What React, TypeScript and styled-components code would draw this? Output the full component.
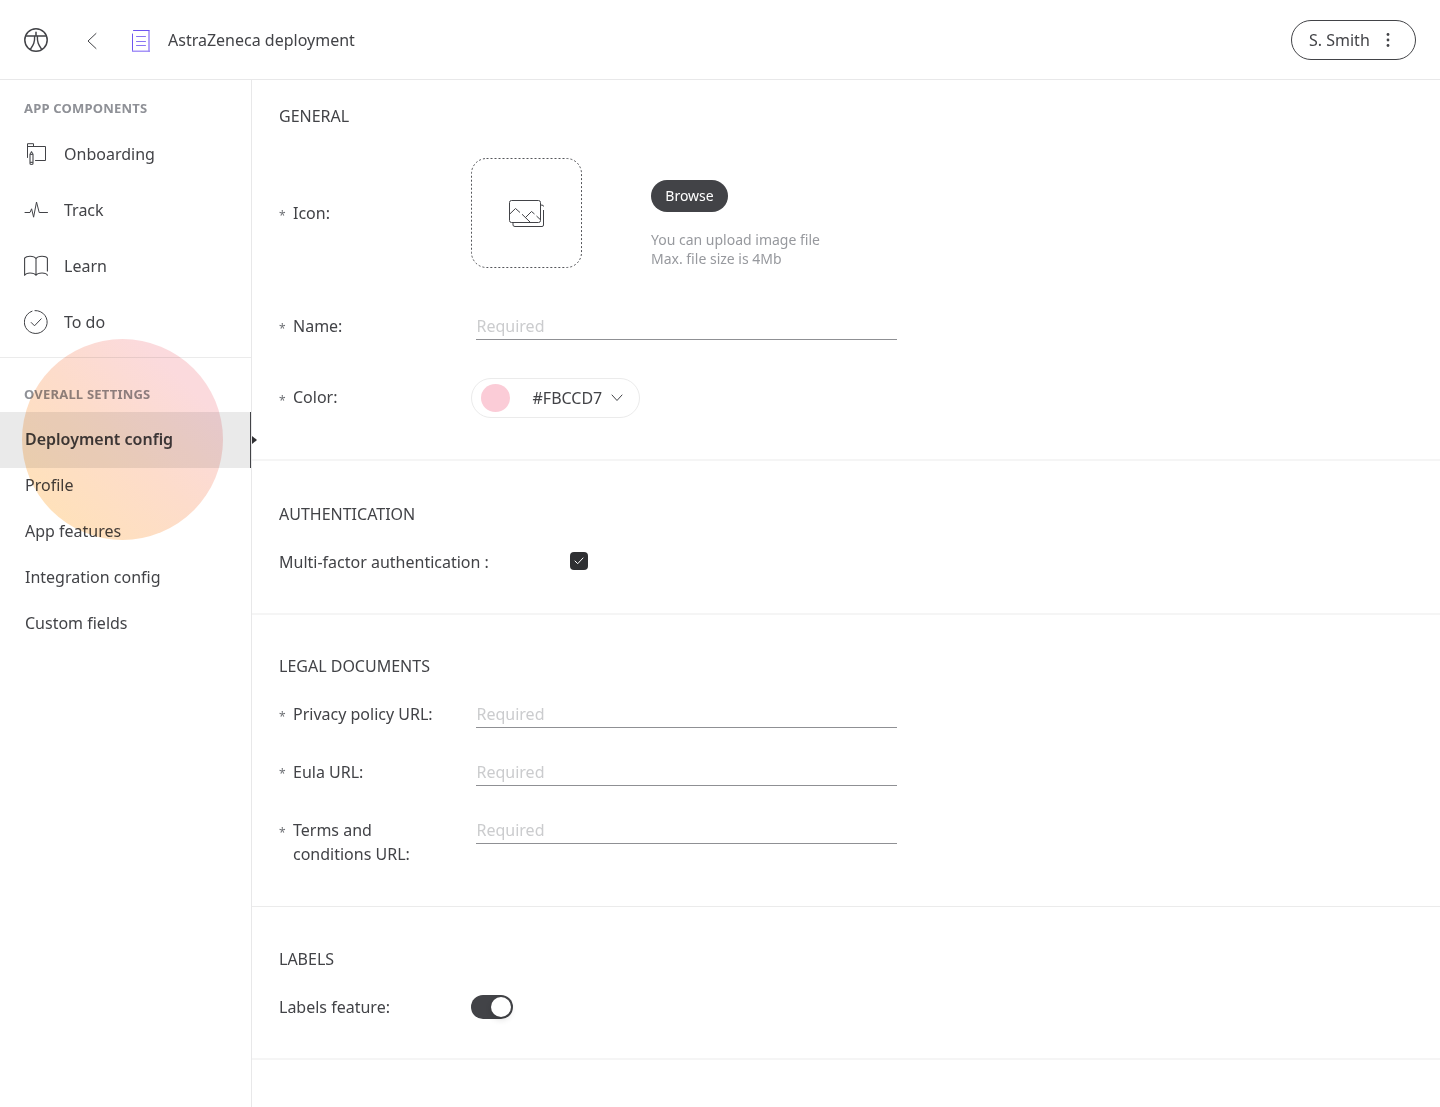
import React from "react";
import styled, { createGlobalStyle } from "styled-components";

const ink = "#424347";
const line = "#ebebeb";

const GlobalStyle = createGlobalStyle`
  *, *::before, *::after { box-sizing: border-box; }
  body {
    margin: 0;
    background: #fff;
    color: ${ink};
    font-family: "Noto Sans", sans-serif;
    font-size: 16px;
    line-height: 24px;
  }
  button, input { font: inherit; color: inherit; }
`;

const Page = styled.div`
  display: flex;
  flex-direction: column;
  width: 1440px;
  height: 1107px;
  overflow: hidden;
`;

const Header = styled.header`
  display: flex;
  align-items: center;
  flex: none;
  height: 80px;
  padding: 0 24px;
  border-bottom: 1px solid #e8e8e9;
`;

const BackButton = styled.button`
  display: flex;
  margin: 3px 0 0 38px;
  padding: 0;
  border: 0;
  background: none;
`;

const HeaderIcon = styled.span`
  display: flex;
  margin: 3px 18px 0 34px;
`;

const HeaderTitle = styled.span`
  flex: 1;
`;

const UserButton = styled.button`
  display: flex;
  align-items: center;
  justify-content: space-between;
  width: 125px;
  height: 40px;
  margin-top: 1px;
  padding: 0 24px 0 17px;
  border: 1px solid ${ink};
  border-radius: 20px;
  background: #fff;
`;

const Body = styled.div`
  display: flex;
  flex: 1;
  min-height: 0;
`;

const Sidebar = styled.nav`
  position: relative;
  flex: none;
  width: 252px;
  border-right: 1px solid #e8e8e9;
`;

const SideHeading = styled.h2<{ $top: number; $bottom: number }>`
  margin: 0;
  padding: ${(p) => p.$top}px 24px ${(p) => p.$bottom}px;
  color: #8f9197;
  font-size: 13px;
  font-weight: 700;
  line-height: 16px;
  letter-spacing: 0.2px;
`;

const SideGroup = styled.div`
  height: 278px;
  border-bottom: 1px solid ${line};
`;

const SideItem = styled.a`
  display: flex;
  align-items: center;
  gap: 16px;
  height: 56px;
  padding-left: 24px;
`;

const SubItem = styled.a<{ $active?: boolean }>`
  display: flex;
  align-items: center;
  position: relative;
  height: ${(p) => (p.$active ? 56 : 46)}px;
  padding-left: 25px;
  padding-bottom: ${(p) => (p.$active ? 2 : 12)}px;
  background: ${(p) => (p.$active ? "#eaeaea" : "none")};
  border-right: ${(p) => (p.$active ? `1px solid ${ink}` : "0")};
  font-weight: ${(p) => (p.$active ? 600 : 400)};
  color: ${(p) => (p.$active ? "#3c3d41" : ink)};

  &::after {
    content: "";
    display: ${(p) => (p.$active ? "block" : "none")};
    position: absolute;
    left: 252px;
    top: 23.5px;
    border: solid transparent;
    border-width: 4px 0 4px 5px;
    border-left-color: #2f3033;
  }
`;

const Highlight = styled.div`
  position: absolute;
  left: 22px;
  top: 259px;
  width: 201px;
  height: 201px;
  border-radius: 50%;
  background: linear-gradient(45deg, #ffe2b8 8%, #fddccb 50%, #fbdadd 80%);
  mix-blend-mode: multiply;
  pointer-events: none;
`;

const Main = styled.main`
  flex: 1;
`;

const Section = styled.section<{ $height: number; $top: number; $thin?: boolean }>`
  height: ${(p) => p.$height}px;
  padding: ${(p) => p.$top}px 27px 0;
  border-bottom: ${(p) => (p.$thin ? `1px solid ${line}` : "2px solid #f5f5f5")};
`;

const SectionTitle = styled.h1<{ $gap?: number }>`
  margin: 0 0 ${(p) => p.$gap ?? 24}px;
  font-size: 16px;
  font-weight: 400;
  line-height: 24px;
`;

const Row = styled.div<{ $center?: boolean; $height: number; $gap?: number }>`
  display: flex;
  align-items: ${(p) => (p.$center ? "center" : "flex-start")};
  height: ${(p) => p.$height}px;
  margin-bottom: ${(p) => p.$gap ?? 0}px;
`;

const Label = styled.label<{ $width?: number; $lift?: number }>`
  display: flex;
  flex: none;
  width: ${(p) => p.$width ?? 192}px;
  padding-bottom: ${(p) => p.$lift ?? 0}px;
`;

const Star = styled.span<{ $top: number }>`
  flex: none;
  width: 14px;
  height: 24px;
  padding-top: ${(p) => p.$top}px;
  color: #6e7075;
  font-size: 12px;
`;

const TextInput = styled.input`
  width: 421px;
  height: 26px;
  margin: 0 0 0 5px;
  padding: 0 0 1px 0.5px;
  border: 0;
  border-bottom: 1px solid #8f9094;
  border-radius: 0;
  background: none;
  outline: none;
  &::placeholder { color: #cbccce; opacity: 1; }
`;

const DropArea = styled.div`
  width: 112px;
  height: 110px;
`;

const UploadInfo = styled.div`
  display: flex;
  flex-direction: column;
  align-items: flex-start;
  align-self: flex-start;
  margin-left: 68px;
  padding-top: 22px;
`;

const BrowseButton = styled.button`
  width: 77px;
  height: 32px;
  margin-bottom: 18px;
  padding: 0;
  border: 0;
  border-radius: 16px;
  background: ${ink};
  color: #fff;
  font-size: 14px;
  line-height: 32px;
`;

const Hint = styled.p`
  margin: 0;
  color: #97999e;
  font-size: 14px;
  line-height: 19px;
`;

const ColorPicker = styled.button`
  display: flex;
  align-items: center;
  width: 169px;
  height: 40px;
  padding: 0 16px 0 9px;
  border: 1px solid ${line};
  border-radius: 20px;
  background: #fff;
`;

const Swatch = styled.span`
  width: 29px;
  height: 28px;
  margin-right: 22.5px;
  border-radius: 50%;
  background: #fbccd7;
`;

const ColorValue = styled.span`
  margin-right: 8.5px;
`;

const Checkbox = styled.span`
  display: flex;
  align-items: center;
  justify-content: center;
  width: 18px;
  height: 18px;
  margin-top: 2px;
  border-radius: 4px;
  background: #2f3033;
`;

const Toggle = styled.span`
  display: flex;
  justify-content: flex-end;
  width: 42px;
  height: 24px;
  padding: 2px;
  border-radius: 12px;
  background: ${ink};
`;

const Knob = styled.span`
  width: 20px;
  height: 20px;
  border-radius: 50%;
  background: #fff;
  box-shadow: 0 3px 6px rgba(0, 0, 0, 0.12);
`;

const Icon = ({ w = 24, h = 24, sw = 1, color = ink, children }: {
  w?: number; h?: number; sw?: number; color?: string; children: React.ReactNode;
}) => (
  <svg width={w} height={h} viewBox={`0 0 ${w} ${h}`} fill="none" stroke={color}
    strokeWidth={sw} strokeLinecap="round" strokeLinejoin="round">{children}</svg>
);

const LogoIcon = () => (
  <Icon sw={1.5}>
    <circle cx="12" cy="12" r="11.2" />
    <path d="M2.2 8H21.8M12 4.2V8" />
    <path d="M10.600 8.500C10.900 14 9.500 16.500 6.500 21.200M13.400 8.500C13.100 14 14.500 16.500 17.500 21.200" strokeWidth="1.400" />
  </Icon>
);

const OnboardingIcon = () => (
  <Icon>
    <path d="M3.500 15.500V1.700H9.500V4.500M3.500 4.500H21.500V18.500H11.500" />
    <path d="M6 12.200L7.500 9.700L9 12.200V21.500Q9 22.500 7.500 22.500T6 21.500ZM6 12.500H9M6 20.300H9" stroke="#55565a" strokeWidth="1.200" />
  </Icon>
);

const TrackIcon = () => (
  <Icon><path d="M1 14.500H6L7.600 10.800L9.600 19.200L12.500 4L15.200 14.500H23.500" /></Icon>
);

const LearnIcon = () => (
  <Icon sw={1.1}>
    <path d="M.6 21.300V4.200C1.800 2.600 4 2.300 6 2.300C8.400 2.300 11 3 12 4.700C13 3 15.600 2.300 18 2.300C20 2.300 22.500 2.700 23.400 4.300V17M12 4.700V21.300M.6 21.300C1.500 19.700 3.500 19 6 19C8.500 19 11 19.600 12 21.300C13 19.600 15.500 19 18 19C20.500 19 22.800 19.700 23.400 21.300" />
  </Icon>
);

const TodoIcon = () => (
  <Icon>
    <path d="M11 .6A11.450 11.450 0 1 1 8 1.200M7.200 12.500L10.500 15.800L17.200 8.800" />
  </Icon>
);

const GalleryIcon = () => (
  <>
    <rect x=".5" y=".5" width="31" height="22" rx="2" />
    <path d="M.8 14L6.500 8.500L11 12.500M13 14.200L21 22M16.500 17.500L22.500 11.500L25.500 14M27.500 16L31.200 19.500M32 5Q35 5 34.500 6.500M34.500 10V25Q34.500 26.500 33 26.500H6Q4 26.500 4 25V23" />
  </>
);

const mainItems = [
  { label: "Onboarding", icon: <OnboardingIcon /> },
  { label: "Track", icon: <TrackIcon /> },
  { label: "Learn", icon: <LearnIcon /> },
  { label: "To do", icon: <TodoIcon /> },
];

const Required = ({ label, lift, star = 3 }: { label: React.ReactNode; lift?: number; star?: number }) => (
  <Label $lift={lift}><Star $top={star}>*</Star><span>{label}</span></Label>
);

export default function App() {
  return (
    <>
      <GlobalStyle />
      <Page>
        <Header>
          <LogoIcon />
          <BackButton aria-label="Back">
            <Icon w={12} h={18}><path d="M10 1.500L2 9L10 16.500" /></Icon>
          </BackButton>
          <HeaderIcon>
            <Icon w={18} h={22} color="#6e55ef">
              <path d="M.5 4V21.500" />
              <path d="M.5 21.300H17.500" stroke="#a694f8" strokeWidth="1.500" />
              <path d="M17 .5V21.500" stroke="#9c8af6" strokeWidth="1.500" />
              <path d="M1.500 .5H17" />
              <path d="M4.500 6.500H13.500M4.500 11.500H13.500M4.500 15.500H13.500" stroke="#8975f3" />
            </Icon>
          </HeaderIcon>
          <HeaderTitle>AstraZeneca deployment</HeaderTitle>
          <UserButton>
            <span>S. Smith</span>
            <svg width="6" height="16" viewBox="0 0 6 16" fill={ink}>
              <circle cx="3" cy="2.500" r="1.400" />
              <circle cx="3" cy="8" r="1.400" />
              <circle cx="3" cy="13.500" r="1.400" />
            </svg>
          </UserButton>
        </Header>
        <Body>
          <Sidebar>
            <SideGroup>
              <SideHeading $top={20} $bottom={10}>APP COMPONENTS</SideHeading>
              {mainItems.map((item) => (
                <SideItem key={item.label}>{item.icon}{item.label}</SideItem>
              ))}
            </SideGroup>
            <SideHeading $top={28} $bottom={10}>OVERALL SETTINGS</SideHeading>
            <SubItem $active>Deployment config</SubItem>
            <SubItem>Profile</SubItem>
            <SubItem>App features</SubItem>
            <SubItem>Integration config</SubItem>
            <SubItem>Custom fields</SubItem>
            <Highlight />
          </Sidebar>
          <Main>
            <Section $height={381} $top={24}>
              <SectionTitle $gap={30}>GENERAL</SectionTitle>
              <Row $center $height={110} $gap={46}>
                <Required label="Icon:" />
                <DropArea>
                  <svg width="112" height="110" viewBox="0 0 112 110" fill="none" stroke={ink}>
                    <rect x=".5" y=".5" width="110" height="109" rx="15" strokeDasharray="2 2" strokeWidth=".9" />
                    <g transform="translate(38 42)"><GalleryIcon /></g>
                  </svg>
                </DropArea>
                <UploadInfo>
                  <BrowseButton>Browse</BrowseButton>
                  <Hint>You can upload image file<br />Max. file size is 4Mb</Hint>
                </UploadInfo>
              </Row>
              <Row $height={26} $gap={38}>
                <Required label="Name:" />
                <TextInput placeholder="Required" />
              </Row>
              <Row $center $height={40}>
                <Required label="Color:" star={4} lift={2} />
                <ColorPicker>
                  <Swatch />
                  <ColorValue>#FBCCD7</ColorValue>
                  <Icon w={12} h={8}><path d="M1 1L6 6.500L11 1" /></Icon>
                </ColorPicker>
              </Row>
            </Section>
            <Section $height={154} $top={41}>
              <SectionTitle>AUTHENTICATION</SectionTitle>
              <Row $height={24}>
                <Label $width={291}>Multi-factor authentication :</Label>
                <Checkbox role="checkbox" aria-checked="true">
                  <Icon w={10} h={8} color="#fff"><path d="M1 4L3.700 6.700L9 1" /></Icon>
                </Checkbox>
              </Row>
            </Section>
            <Section $height={292} $top={39} $thin>
              <SectionTitle>LEGAL DOCUMENTS</SectionTitle>
              <Row $height={26} $gap={32}>
                <Required label="Privacy policy URL:" />
                <TextInput placeholder="Required" />
              </Row>
              <Row $height={26} $gap={32}>
                <Required label="Eula URL:" star={2} />
                <TextInput placeholder="Required" />
              </Row>
              <Row $height={48}>
                <Required label={<>Terms and<br />conditions URL:</>} />
                <TextInput placeholder="Required" />
              </Row>
            </Section>
            <Section $height={153} $top={40}>
              <SectionTitle>LABELS</SectionTitle>
              <Row $height={24}>
                <Label>Labels feature:</Label>
                <Toggle role="switch" aria-checked="true"><Knob /></Toggle>
              </Row>
            </Section>
          </Main>
        </Body>
      </Page>
    </>
  );
}
